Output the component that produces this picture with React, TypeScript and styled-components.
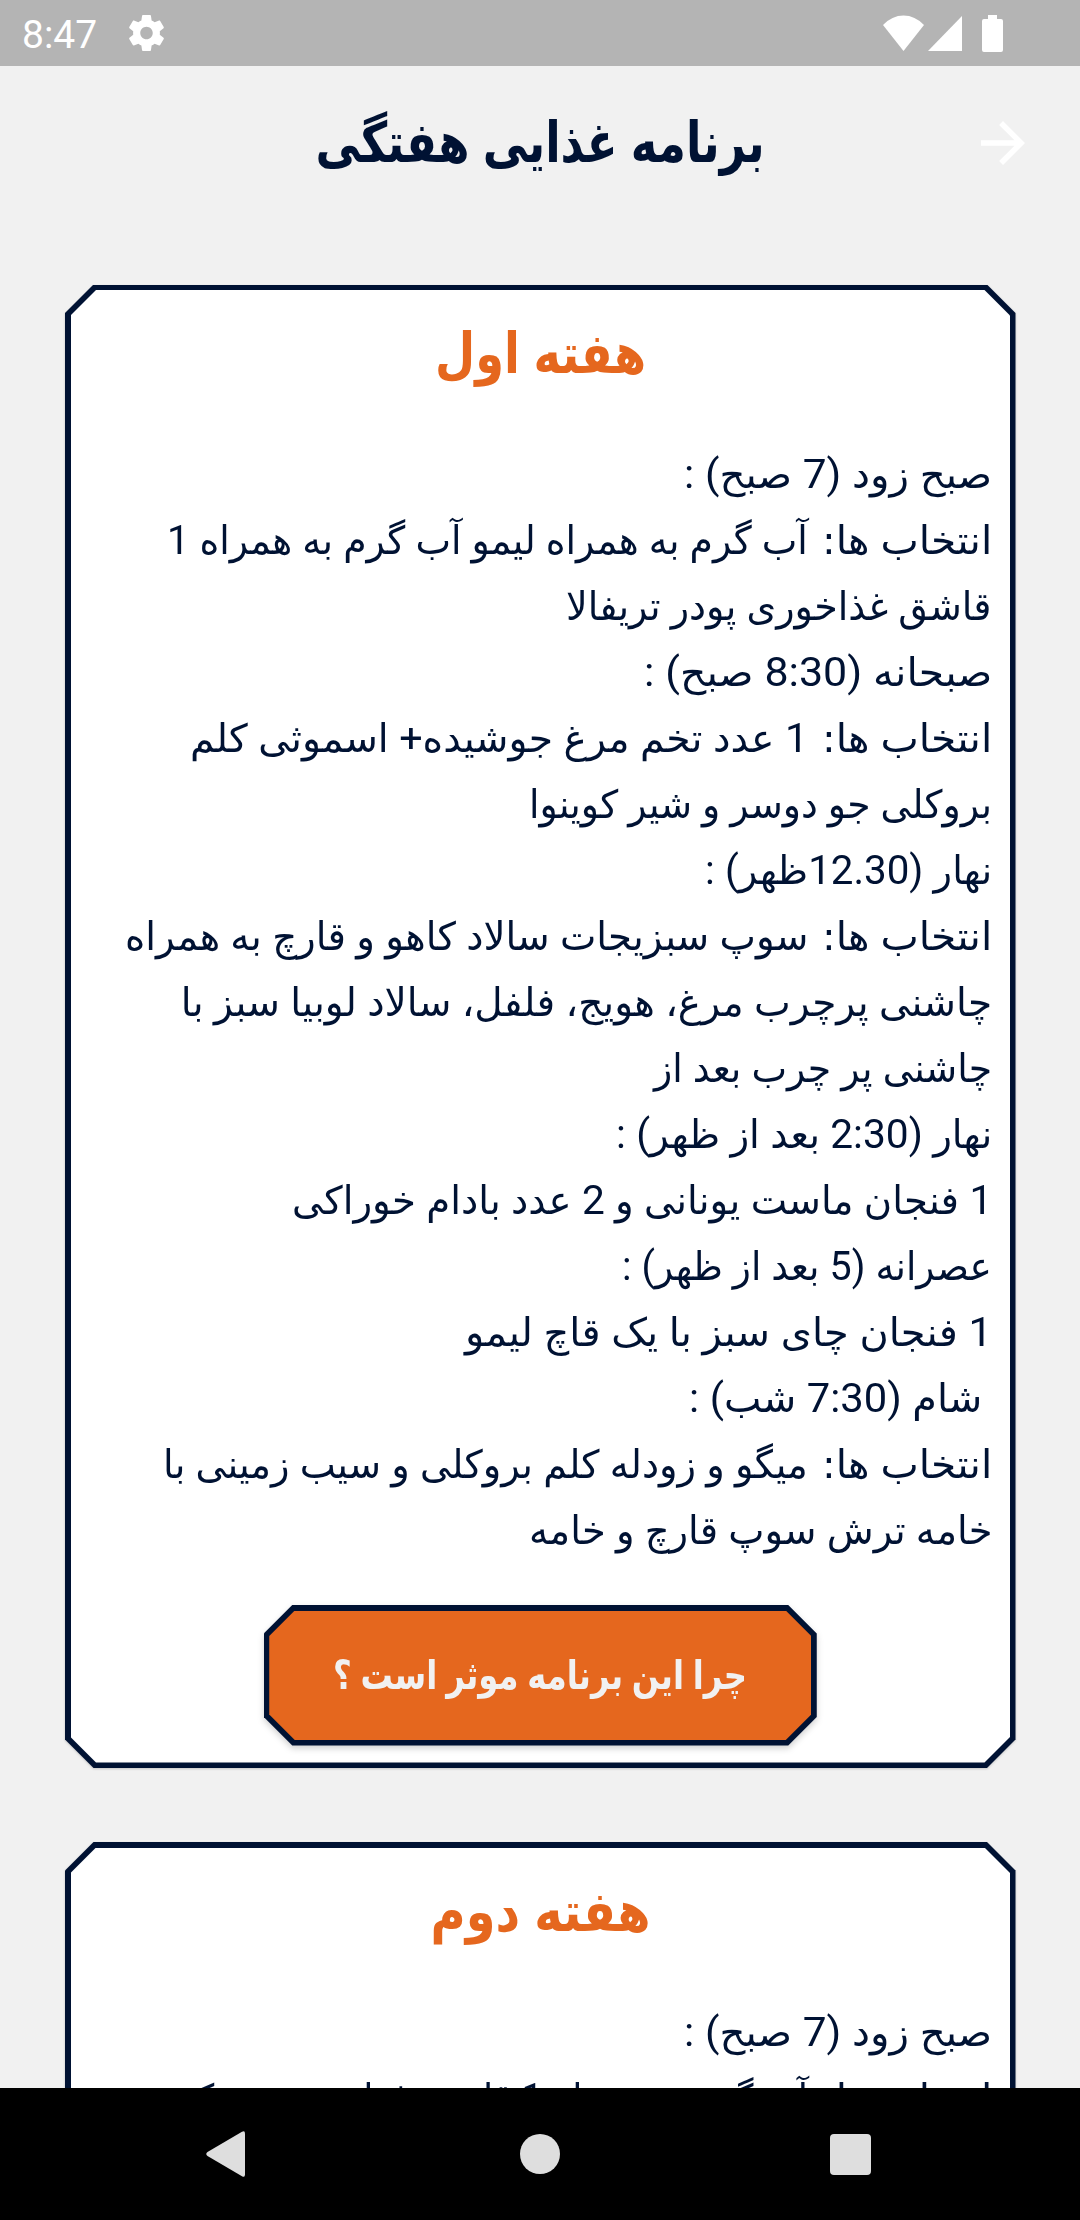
import React, { useLayoutEffect, useRef, useState } from "react";
import styled, { createGlobalStyle, css } from "styled-components";

const NAVY = "#001233";
const ORANGE = "#e5671e";
const BG = "#f1f1f1";

const Global = createGlobalStyle`
  * { box-sizing: border-box; }
  html, body { margin: 0; padding: 0; background: ${BG}; }
  body { font-family: "DejaVu Sans", Roboto, sans-serif; color: ${NAVY}; }
`;

const Screen = styled.div`
  width: 1080px;
  height: 2220px;
  display: flex;
  flex-direction: column;
  overflow: hidden;
  background: ${BG};
`;

const StatusBar = styled.div`
  flex: none;
  height: 66px;
  padding: 0 77px 0 22px;
  display: flex;
  align-items: center;
  background: #b4b4b4;
  color: #fff;
`;
const Clock = styled.span`
  font: 400 39px/66px Roboto, sans-serif;
  padding-top: 3px;
  width: 107px;
`;
const Spacer = styled.span`
  flex: 1;
`;
const Glyph = styled.svg<{ $gap?: number }>`
  display: block;
  flex: none;
  margin-left: ${(p) => p.$gap ?? 0}px;
`;

const AppBar = styled.header`
  flex: none;
  height: 154px;
  padding: 0 51px;
  display: grid;
  grid-template-columns: 48px 1fr 48px;
  align-items: center;
`;

const Heading = styled.h1<{ $size: number; $color: string; $line: number }>`
  margin: 0;
  display: flex;
  justify-content: center;
  white-space: nowrap;
  direction: rtl;
  font-family: "DejaVu Sans", sans-serif;
  font-weight: 700;
  font-size: ${(p) => p.$size}px;
  line-height: ${(p) => p.$line}px;
  height: ${(p) => p.$line}px;
  color: ${(p) => p.$color};
  word-spacing: -3px;
`;

const FitSpan = styled.span<{ $origin: string }>`
  display: inline-block;
  flex: none;
  white-space: nowrap;
  transform-origin: ${(p) => p.$origin} center;
`;

const Feed = styled.main`
  flex: 1;
  min-height: 0;
  overflow: hidden;
  padding: 64.5px 64.5px 0 65px;
  display: flex;
  flex-direction: column;
  gap: 74px;
`;

const bevel = (c: number) => css`
  clip-path: polygon(
    ${c}px 0, calc(100% - ${c}px) 0, 100% ${c}px, 100% calc(100% - ${c}px),
    calc(100% - ${c}px) 100%, ${c}px 100%, 0 calc(100% - ${c}px), 0 ${c}px
  );
`;

const Shadow = styled.div<{ $depth?: number }>`
  flex: none;
  display: flex;
  filter: drop-shadow(0 ${(p) => p.$depth ?? 1}px ${(p) => p.$depth ?? 1}px rgba(0, 0, 0, 0.18));
`;
const Frame = styled.div`
  flex: 1;
  display: flex;
  padding: 5.5px;
  background: ${NAVY};
  ${bevel(28.5)}
`;
const CardBody = styled.section`
  flex: 1;
  height: 1472.5px;
  padding: 20px 18px 0;
  display: flex;
  flex-direction: column;
  align-items: center;
  background: #fff;
  ${bevel(25.5)}
`;

const Meals = styled.div`
  align-self: stretch;
  margin-top: 44px;
  direction: rtl;
`;
const Line = styled.p<{ $indent?: number }>`
  margin: 0;
  height: 66px;
  display: flex;
  line-height: 66px;
  white-space: nowrap;
  font-family: "DejaVu Sans", sans-serif;
  font-size: 39px;
  word-spacing: -2px;
  padding-right: ${(p) => p.$indent ?? 0}px;
`;
const Lead = styled.span`
  flex: none;
  width: 184px;
`;
const Latin = styled.span`
  font-family: Roboto, sans-serif;
  font-size: 41px;
  line-height: 1;
`;

const ButtonShadow = styled(Shadow)`
  width: 553px;
  height: 140.5px;
  margin-top: 41px;
`;
const ButtonFace = styled.button`
  flex: 1;
  border: 0;
  padding: 0;
  display: flex;
  align-items: center;
  justify-content: center;
  background: ${ORANGE};
  ${bevel(25.5)}
`;

const NavBar = styled.nav`
  flex: none;
  height: 132px;
  padding: 0 209px 0 206px;
  display: flex;
  align-items: center;
  justify-content: space-between;
  background: #000;
`;

type FitProps = { width: number; origin?: string; children: React.ReactNode };

// Condenses or widens a line of text so that it takes exactly `width` pixels.
function Fit({ width, origin = "center", children }: FitProps) {
  const ref = useRef<HTMLSpanElement>(null);
  const [scale, setScale] = useState(1);
  useLayoutEffect(() => {
    const natural = ref.current?.offsetWidth;
    if (natural) setScale(width / natural);
  }, [width]);
  return (
    <FitSpan ref={ref} $origin={origin} style={{ transform: `scaleX(${scale})` }}>
      {children}
    </FitSpan>
  );
}

type Row = { text: string; width: number; indent?: number; options?: boolean };

const first: Row[] = [
  { text: "صبح زود (7 صبح) :", width: 308 },
  { text: "آب گرم به همراه لیمو آب گرم به همراه 1", width: 641, options: true },
  { text: "قاشق غذاخوری پودر تریفالا", width: 426 },
  { text: "صبحانه (8:30 صبح) :", width: 348 },
  { text: "1 عدد تخم مرغ جوشیده+ اسموثی کلم", width: 618, options: true },
  { text: "بروکلی جو دوسر و شیر کوینوا", width: 463 },
  { text: "نهار (12.30ظهر) :", width: 287 },
  { text: "سوپ سبزیجات سالاد کاهو و قارچ به همراه", width: 683, options: true },
  { text: "چاشنی پرچرب مرغ، هویج، فلفل، سالاد لوبیا سبز با", width: 811 },
  { text: "چاشنی پر چرب بعد از", width: 338 },
  { text: "نهار (2:30 بعد از ظهر) :", width: 376 },
  { text: "1 فنجان ماست یونانی و 2 عدد بادام خوراکی", width: 700 },
  { text: "عصرانه (5 بعد از ظهر) :", width: 370 },
  { text: "1 فنجان چای سبز با یک قاچ لیمو", width: 527 },
  { text: "شام (7:30 شب) :", width: 293, indent: 10 },
  { text: "میگو و زودله کلم بروکلی و سیب زمینی با", width: 645, options: true },
  { text: "خامه ترش سوپ قارچ و خامه", width: 463 },
];
const second: Row[] = [
  { text: "صبح زود (7 صبح) :", width: 308 },
  { text: "آب گرم به همراه 1 قاشق غذاخوری سرکه", width: 631, options: true },
];

const MealLine = ({ text, width, indent, options }: Row) => (
  <Line $indent={indent}>
    {options && (
      <Lead>
        <Fit width={170} origin="right">انتخاب ها:</Fit>
      </Lead>
    )}
    <Fit width={width} origin="right">
      {text.split(/([0-9:.+()]+)/).map((part, i) => (i % 2 ? <Latin key={i}>{part}</Latin> : part))}
    </Fit>
  </Line>
);

type WeekProps = { title: string; titleWidth: number; rows: Row[]; children?: React.ReactNode };

const WeekCard = ({ title, titleWidth, rows, children }: WeekProps) => (
  <Shadow>
    <Frame>
      <CardBody>
        <Heading as="h2" $size={56} $line={88} $color={ORANGE}>
          <Fit width={titleWidth}>{title}</Fit>
        </Heading>
        <Meals>
          {rows.map((r, i) => <MealLine key={i} {...r} />)}
        </Meals>
        {children}
      </CardBody>
    </Frame>
  </Shadow>
);

export default function App() {
  return (
    <Screen>
      <Global />
      <StatusBar>
        <Clock>8:47</Clock>
        <Glyph width="35" height="36" viewBox="2.2 2 19.6 20" preserveAspectRatio="none" fill="#fff">
          <path d="M19.43 12.98c.04-.32.07-.64.07-.98s-.03-.66-.07-.98l2.11-1.65c.19-.15.24-.42.12-.64l-2-3.46c-.12-.22-.39-.3-.61-.22l-2.49 1c-.52-.4-1.08-.73-1.69-.98l-.38-2.65C14.46 2.18 14.25 2 14 2h-4c-.25 0-.46.18-.49.42l-.38 2.65c-.61.25-1.17.59-1.69.98l-2.49-1c-.23-.09-.49 0-.61.22l-2 3.46c-.13.22-.07.49.12.64l2.11 1.65c-.04.32-.07.65-.07.98s.03.66.07.98l-2.11 1.65c-.19.15-.24.42-.12.64l2 3.46c.12.22.39.3.61.22l2.49-1c.52.4 1.08.73 1.69.98l.38 2.65c.03.24.24.42.49.42h4c.25 0 .46-.18.49-.42l.38-2.65c.61-.25 1.17-.59 1.69-.98l2.49 1c.23.09.49 0 .61-.22l2-3.46c.12-.22.07-.49-.12-.64l-2.11-1.65zM12 15.5c-1.93 0-3.5-1.57-3.5-3.5s1.57-3.5 3.5-3.5 3.5 1.57 3.5 3.5-1.57 3.5-3.5 3.5z" />
        </Glyph>
        <Spacer />
        <Glyph width="41" height="36" viewBox="0 0 41 36" fill="#fff"><path d="M0 10Q9 .5 20.500 .5T41 10L20.500 36Z" /></Glyph>
        <Glyph $gap={4} width="34" height="36" viewBox="0 0 34 36" fill="#fff"><path d="M34 1V36H0Z" /></Glyph>
        <Glyph $gap={20} width="21" height="37" viewBox="0 0 21 37" fill="#fff"><path d="M6 0h9v4h4a2 2 0 0 1 2 2v29a2 2 0 0 1-2 2H2a2 2 0 0 1-2-2V6a2 2 0 0 1 2-2h4z" /></Glyph>
      </StatusBar>
      <AppBar>
        <span />
        <Heading $size={56} $line={88} $color={NAVY}>
          <Fit width={449}>برنامه غذایی هفتگی</Fit>
        </Heading>
        <Glyph width="44" height="44" viewBox="4 4 16 16" fill="#fff"><path d="M12 4l-1.410 1.410L16.170 11H4v2h12.170l-5.580 5.590L12 20l8-8z" /></Glyph>
      </AppBar>
      <Feed>
        <WeekCard title="هفته اول" titleWidth={211} rows={first}>
          <ButtonShadow $depth={3}>
            <Frame>
              <ButtonFace>
                <Heading as="span" $size={40} $line={64} $color={BG}>
                  <Fit width={414}>چرا این برنامه موثر است ؟</Fit>
                </Heading>
              </ButtonFace>
            </Frame>
          </ButtonShadow>
        </WeekCard>
        <WeekCard title="هفته دوم" titleWidth={220} rows={second} />
      </Feed>
      <NavBar>
        <Glyph width="39" height="46" viewBox="0 0 39 46" fill="#dedede"><path d="M36 .8Q39-.8 39 2.500V43.500Q39 46.800 36 45.200L1.500 25Q-1 23 1.500 21Z" /></Glyph>
        <Glyph $gap={5} width="40" height="40" viewBox="0 0 40 40" fill="#dedede"><circle cx="20" cy="20" r="20" /></Glyph>
        <Glyph width="41" height="41" viewBox="0 0 41 41" fill="#dedede"><rect width="41" height="41" rx="4" /></Glyph>
      </NavBar>
    </Screen>
  );
}
